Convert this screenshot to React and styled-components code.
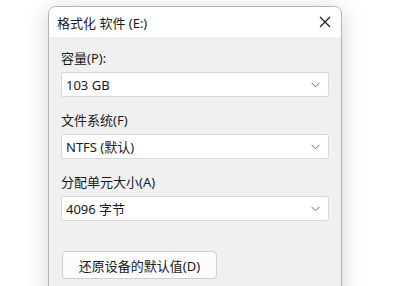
import React from "react";
import styled, { createGlobalStyle } from "styled-components";

const Global = createGlobalStyle`
  html, body {
    margin: 0;
    background: #ffffff;
    font-family: "Noto Sans", "Noto Sans CJK SC", sans-serif;
    font-size: 13px;
    color: #1a1a1a;
  }
`;

const Page = styled.div`
  width: 417px;
  height: 286px;
  overflow: hidden;
  padding: 6px 0 0 48px;
  box-sizing: border-box;
`;

const Dialog = styled.div`
  width: 294px;
  height: 320px;
  box-sizing: border-box;
  border: 1px solid #b4b4b4;
  border-radius: 8px 8px 0 0;
  background: #f0f0f0;
  box-shadow: 0 4px 24px rgba(0, 0, 0, 0.18);
  overflow: hidden;
`;

const TitleBar = styled.div`
  height: 30px;
  background: #ffffff;
  display: flex;
  align-items: center;
  justify-content: space-between;
  padding: 0 10px 0 8px;
`;

const Title = styled.span`
  font-size: 13px;
`;

const Close = styled.svg`
  width: 12px;
  height: 12px;
`;

const Body = styled.div`
  padding: 12px 12px 0 12px;
  display: flex;
  flex-direction: column;
`;

const Label = styled.div`
  font-size: 13px;
  line-height: 18px;
  margin-bottom: 5px;
`;

const Field = styled.div`
  margin-bottom: 14px;
`;

const Combo = styled.div`
  height: 25px;
  box-sizing: border-box;
  background: #ffffff;
  border: 1px solid #d9d9d9;
  border-radius: 2px;
  display: flex;
  align-items: center;
  justify-content: space-between;
  padding: 0 8px 0 4px;
  font-size: 13px;
`;

const Chevron = styled.svg`
  width: 9px;
  height: 6px;
`;

const Button = styled.button`
  margin-top: 16px;
  margin-left: 1px;
  width: 155px;
  height: 28px;
  background: #fcfcfc;
  border: 1px solid #cfcfcf;
  border-radius: 4px;
  font-family: inherit;
  font-size: 13px;
  color: #1a1a1a;
  padding: 0;
`;

function ComboBox({ value }) {
  return (
    <Combo>
      <span>{value}</span>
      <Chevron viewBox="0 0 9 6">
        <path d="M0.5 0.8 L4.5 4.8 L8.5 0.8" fill="none" stroke="#6a6a6a" strokeWidth="1" />
      </Chevron>
    </Combo>
  );
}

export default function App() {
  return (
    <Page>
      <Global />
      <Dialog>
        <TitleBar>
          <Title>格式化 软件 (E:)</Title>
          <Close viewBox="0 0 12 12">
            <path d="M1 1 L11 11 M11 1 L1 11" stroke="#1a1a1a" strokeWidth="1.1" />
          </Close>
        </TitleBar>
        <Body>
          <Field>
            <Label>容量(P):</Label>
            <ComboBox value="103 GB" />
          </Field>
          <Field>
            <Label>文件系统(F)</Label>
            <ComboBox value="NTFS (默认)" />
          </Field>
          <Field>
            <Label>分配单元大小(A)</Label>
            <ComboBox value="4096 字节" />
          </Field>
          <Button>还原设备的默认值(D)</Button>
        </Body>
      </Dialog>
    </Page>
  );
}
